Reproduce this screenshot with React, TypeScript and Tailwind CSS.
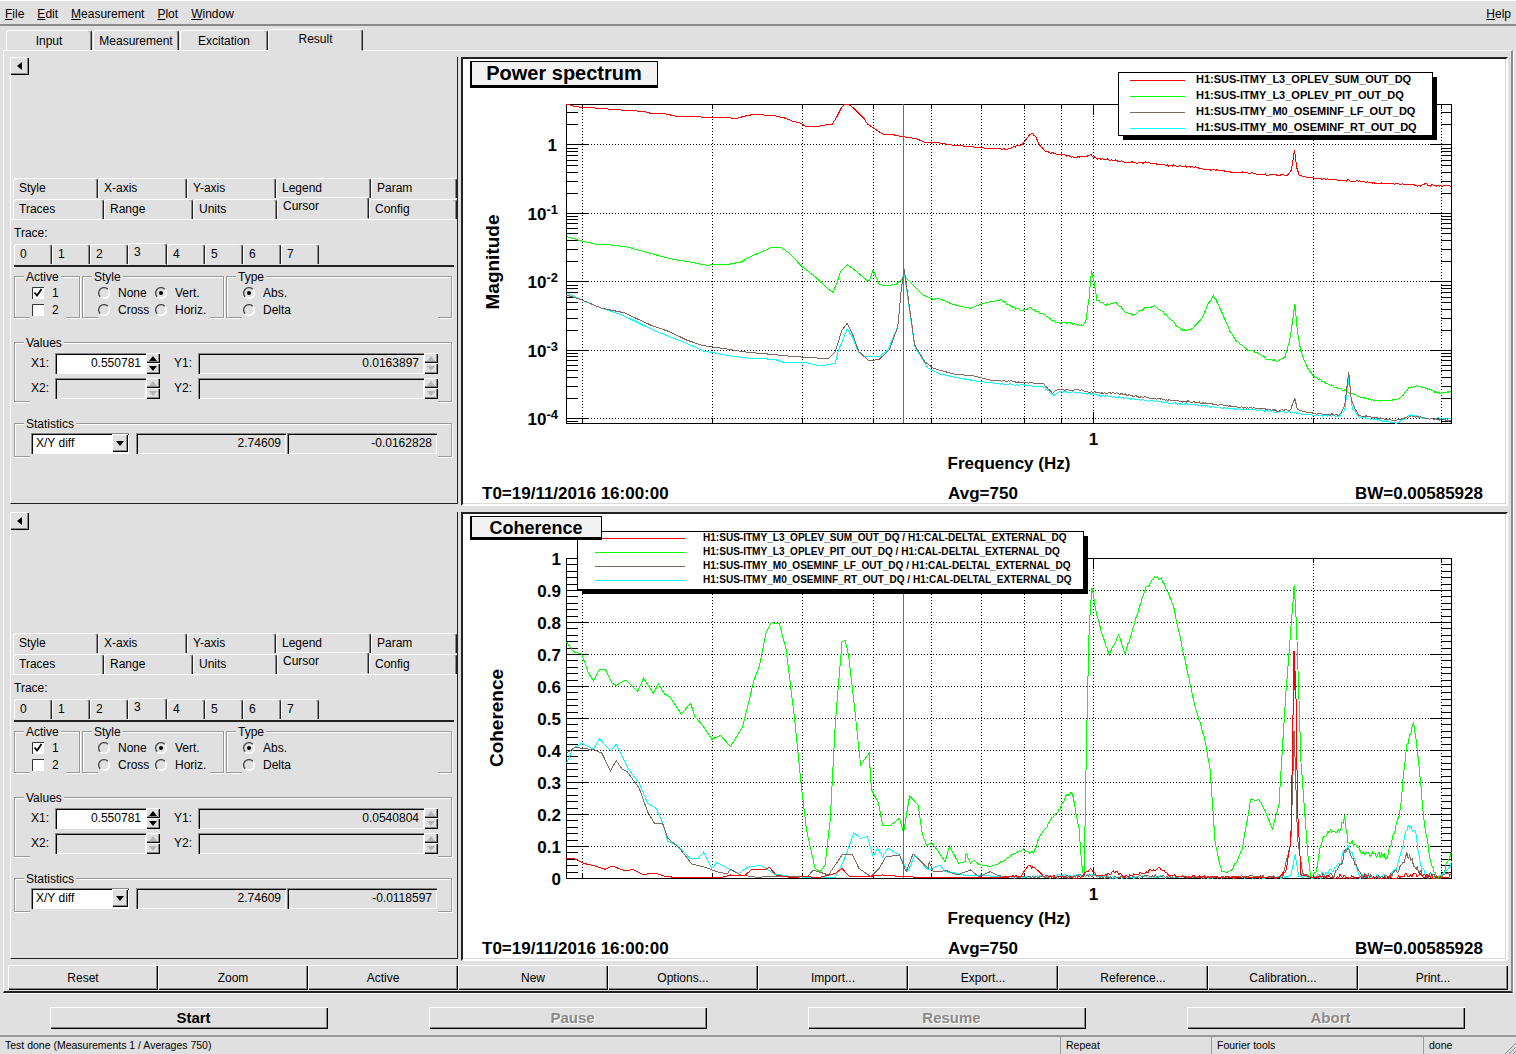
import type { ReactNode } from "react";

type Pts = [number, number][];

const BROWN = "#80675c";
const RAISED = "shadow-[inset_1px_1px_0_#fff,inset_-1px_-1px_0_#000,inset_-2px_-2px_0_#8a8a8a]";
const SUNKEN = "shadow-[inset_1px_1px_0_#8a8a8a,inset_2px_2px_0_#000,inset_-1px_-1px_0_#fff]";

// traces were read off the screenshot: left half and right half of each plot
const spec = {
  red: [
    [[315,160],[340,170],[362,172],[400,174],[450,178],[500,182],[545,184],[570,192],[600,190],[640,199],[700,200],[745,203],[790,202],[815,206],[840,199],[870,193],[930,197],[960,204],[985,214],[1010,220],[1020,228],[1040,229],[1060,229],[1080,225],[1100,224],[1115,200],[1130,170],[1140,160],[1155,166],[1170,180],[1195,205],[1205,222],[1225,235],[1250,252],[1275,253],[1310,260],[1350,266],[1375,277],[1415,278],[1460,286],[1500,289],[1540,293],[1568,296]],
    [[0,295],[30,296],[55,298],[75,290],[95,285],[110,265],[125,250],[135,260],[150,290],[165,304],[190,310],[215,314],[250,322],[280,320],[300,314],[315,326],[350,329],[380,332],[420,338],[470,338],[520,345],[570,349],[600,350],[640,358],[680,360],[720,367],[760,367],[800,373],[860,375],[885,376],[897,360],[906,300],[912,350],[920,378],[960,384],[1000,388],[1060,391],[1100,393],[1150,399],[1200,401],[1250,404],[1280,407],[1295,400],[1310,407],[1340,407],[1376,410]],
  ],
  green: [
    [[315,560],[360,573],[400,582],[440,584],[490,590],[530,601],[570,612],[600,620],[630,628],[680,636],[730,646],[770,642],[800,642],[830,636],[870,615],[920,593],[950,593],[975,610],[1010,648],[1050,680],[1090,718],[1103,727],[1115,700],[1125,665],[1145,644],[1165,658],[1205,692],[1212,690],[1222,660],[1240,703],[1260,708],[1290,703],[1315,680],[1335,700],[1370,735],[1400,748],[1415,745],[1450,760],[1475,768],[1510,775],[1540,763],[1568,755]],
    [[0,757],[35,750],[65,772],[95,782],[120,775],[170,800],[195,817],[245,820],[275,828],[285,815],[295,740],[302,660],[310,700],[318,750],[345,765],[375,758],[405,787],[425,795],[460,775],[490,768],[520,790],[560,832],[575,842],[600,838],[630,805],[650,760],[665,737],[680,765],[715,845],[735,875],[770,902],[790,905],[830,930],[860,932],[878,920],[892,870],[907,762],[915,850],[925,905],[945,955],[965,980],[1000,1000],[1050,1020],[1100,1040],[1150,1052],[1190,1052],[1220,1045],[1245,1015],[1265,1007],[1300,1015],[1320,1025],[1350,1030],[1376,1022]],
  ],
  brown: [
    [[315,735],[360,750],[420,775],[485,788],[570,828],[620,845],[670,870],[720,887],[790,897],[850,907],[920,913],[960,917],[1020,922],[1090,926],[1110,905],[1130,840],[1145,820],[1160,850],[1180,905],[1210,933],[1240,928],[1270,900],[1295,830],[1305,720],[1314,658],[1324,730],[1345,885],[1375,935],[1400,955],[1460,972],[1520,978],[1568,990]],
    [[0,988],[50,993],[100,998],[160,1003],[185,1030],[205,1018],[260,1020],[310,1028],[380,1030],[460,1042],[530,1050],[600,1056],[680,1064],[740,1072],[800,1075],[860,1082],[895,1078],[907,1045],[915,1080],[960,1090],[1040,1095],[1055,1070],[1067,965],[1075,1050],[1095,1095],[1150,1102],[1210,1112],[1250,1098],[1300,1105],[1376,1112]],
  ],
  cyan: [
    [[315,728],[360,750],[420,775],[480,795],[570,840],[620,860],[670,880],[720,903],[770,912],[800,918],[860,925],[930,928],[960,938],[1020,937],[1065,948],[1110,940],[1120,900],[1145,838],[1160,860],[1178,905],[1195,918],[1240,920],[1265,900],[1295,830],[1305,720],[1314,665],[1324,740],[1345,890],[1385,955],[1420,972],[1480,985],[1540,995],[1568,998]],
    [[0,994],[50,1003],[110,1007],[160,1012],[190,1038],[210,1024],[260,1028],[310,1033],[380,1042],[460,1050],[530,1058],[600,1064],[680,1072],[740,1078],[800,1080],[860,1085],[905,1088],[940,1095],[1040,1098],[1055,1080],[1068,985],[1078,1075],[1100,1102],[1150,1108],[1210,1120],[1250,1095],[1300,1106],[1376,1106]],
  ],
} as Record<string, [Pts, Pts]>;

const coh = {
  red: [
    [[315,1045],[340,1047],[365,1060],[400,1068],[430,1078],[450,1068],[490,1083],[510,1078],[540,1093],[580,1090],[610,1100],[660,1103],[700,1105],[770,1103],[800,1095],[840,1098],[865,1077],[900,1080],[915,1072],[935,1095],[975,1102],[1030,1100],[1060,1103],[1110,1090],[1130,1075],[1150,1098],[1200,1100],[1250,1095],[1312,1100],[1400,1103],[1568,1103]],
    [[0,1100],[90,1100],[115,1068],[140,1080],[160,1100],[270,1103],[300,1075],[320,1100],[375,1085],[400,1100],[470,1085],[505,1073],[530,1095],[580,1100],[860,1103],[880,1080],[895,1000],[903,530],[905,423],[910,540],[915,900],[925,1095],[960,1103],[1200,1103],[1275,1092],[1290,1103],[1376,1103]],
  ],
  green: [
    [[315,395],[335,425],[360,432],[380,490],[395,512],[412,478],[430,478],[450,520],[462,526],[490,510],[525,545],[543,505],[572,550],[587,522],[605,552],[620,560],[655,612],[682,580],[695,620],[720,650],[745,688],[770,676],[800,710],[836,650],[870,510],[885,470],[905,370],[920,338],[945,342],[965,420],[990,630],[1010,830],[1025,960],[1050,1075],[1065,1085],[1080,1065],[1095,930],[1110,640],[1130,395],[1140,392],[1150,440],[1170,620],[1185,765],[1210,730],[1217,838],[1238,880],[1250,945],[1275,945],[1300,925],[1312,968],[1330,858],[1355,885],[1368,975],[1380,1005],[1395,998],[1415,1025],[1435,1055],[1448,1008],[1475,1060],[1495,1055],[1497,1030],[1510,1060],[1520,1050],[1535,1063],[1568,1070]],
    [[0,1065],[30,1060],[60,1040],[95,1018],[130,1030],[150,975],[185,925],[205,900],[225,860],[245,848],[265,960],[275,1085],[280,1095],[287,700],[295,350],[303,230],[315,300],[335,380],[355,432],[383,375],[402,432],[425,355],[460,240],[490,203],[510,205],[545,285],[580,450],[610,590],[640,690],[655,780],[670,1000],[690,1088],[720,1080],[750,1020],[775,870],[800,870],[820,905],[840,960],[860,880],[880,550],[905,228],[912,350],[925,750],[945,1030],[955,1100],[970,1085],[990,975],[1020,960],[1040,960],[1055,920],[1065,990],[1090,1005],[1100,1025],[1180,1040],[1200,975],[1220,900],[1240,710],[1260,630],[1275,760],[1290,920],[1310,1050],[1325,1098],[1345,1100],[1365,1040],[1376,1020]],
  ],
  brown: [
    [[315,730],[340,712],[400,720],[420,730],[445,783],[462,752],[480,778],[495,785],[530,835],[555,905],[575,940],[600,942],[615,985],[650,1015],[685,1062],[720,1070],[760,1085],[790,1092],[800,1078],[830,1095],[880,1102],[940,1098],[990,1100],[1030,1098],[1045,1080],[1090,1095],[1130,1035],[1160,1033],[1180,1075],[1215,1100],[1240,1075],[1260,1040],[1300,1035],[1320,1085],[1340,1032],[1385,1075],[1388,1055],[1400,1085],[1440,1082],[1470,1095],[1510,1080],[1535,1100],[1568,1085]],
    [[0,1088],[30,1100],[100,1102],[200,1102],[300,1095],[340,1103],[480,1098],[650,1103],[790,1098],[870,1103],[895,1000],[905,660],[915,990],[930,1090],[960,1103],[1020,1095],[1045,1060],[1065,1005],[1085,1060],[1110,1095],[1180,1102],[1220,1075],[1240,1035],[1260,1060],[1290,1095],[1340,1103],[1376,1090]],
  ],
  cyan: [
    [[315,760],[335,715],[360,700],[395,718],[412,686],[445,722],[462,703],[500,780],[530,820],[555,880],[580,895],[600,940],[615,995],[640,1003],[680,1045],[705,1045],[720,1027],[745,1075],[760,1057],[800,1080],[825,1090],[850,1072],[890,1066],[930,1092],[970,1098],[1040,1103],[1110,1103],[1140,1040],[1165,968],[1185,985],[1205,980],[1222,1040],[1235,1015],[1250,1040],[1265,1015],[1300,1035],[1325,1085],[1345,1035],[1385,1080],[1420,1065],[1435,1085],[1470,1090],[1500,1098],[1540,1095],[1568,1098]],
    [[0,1098],[100,1103],[180,1098],[300,1095],[340,1103],[480,1100],[650,1103],[880,1103],[895,1095],[908,1035],[918,1100],[960,1103],[1010,1085],[1040,1060],[1065,1000],[1085,1050],[1100,1098],[1190,1100],[1215,1060],[1240,955],[1265,955],[1280,1060],[1300,1100],[1340,1103],[1365,1080],[1376,1040]],
  ],
} as Record<string, [Pts, Pts]>;

const rand = (i: number) => {
  const v = Math.sin(i * 12.9898) * 43758.5453;
  return v - Math.floor(v) - 0.5;
};

// zoom-space points to a path; the right half gets fine noise like the real data
function tracePath(parts: [Pts, Pts], yOff: number, noise: (x: number) => number, top: number, bottom: number) {
  const left = parts[0].map(([x, y]) => [460 + x / 2.958, yOff + y / 3]);
  const right = parts[1].map(([x, y]) => [990 + x / 2.975, yOff + y / 3]).filter(([x]) => x > left[left.length - 1][0]);
  const pts = [...left, ...right];
  const out: string[] = [];
  let k = 0;
  for (let i = 0; i < pts.length - 1; i++) {
    const [x0, y0] = pts[i];
    const [x1, y1] = pts[i + 1];
    const steps = x0 < 990 ? 1 : Math.max(1, Math.round((x1 - x0) / 1.3));
    for (let s = 0; s < steps; s++) {
      const x = x0 + ((x1 - x0) * s) / steps;
      const y = y0 + ((y1 - y0) * s) / steps + noise(x) * rand(++k);
      out.push(`${out.length ? "L" : "M"}${x.toFixed(1)} ${Math.min(bottom, Math.max(top, y)).toFixed(1)}`);
    }
  }
  return out.join("");
}

const X_GRID = [582.5, 712.5, 802.5, 873.5, 931.5, 981.5, 1024.5, 1061.5, 1093.5, 1313.5, 1441.5];
const LEFT = 566.5;
const RIGHT = 1451.5;

function Frame({ top, bottom, yMajor, yMinor }: { top: number; bottom: number; yMajor: number[]; yMinor: number[] }) {
  return (
    <g shapeRendering="crispEdges" stroke="#000" fill="none">
      {X_GRID.map((x) => (
        <line key={x} x1={x} x2={x} y1={top} y2={bottom} strokeDasharray="1 2" />
      ))}
      {yMajor.map((y) => (
        <line key={y} x1={LEFT} x2={RIGHT} y1={y} y2={y} strokeDasharray="1 2" />
      ))}
      {X_GRID.map((x) => (
        <path key={x} d={`M${x} ${top}v${x === 1093.5 ? 11 : 5}M${x} ${bottom}v-${x === 1093.5 ? 11 : 5}`} />
      ))}
      {yMajor.map((y) => (
        <path key={y} d={`M${LEFT} ${y}h22M${RIGHT} ${y}h-22`} />
      ))}
      {yMinor.map((y, i) => (
        <path key={i} d={`M${LEFT} ${y}h11M${RIGHT} ${y}h-11`} />
      ))}
      <rect x={LEFT} y={top} width={RIGHT - LEFT} height={bottom - top} />
    </g>
  );
}

function Footer() {
  return (
    <g>
      <text x={1009} y={469} textAnchor="middle" className="text-[17px] font-bold">Frequency (Hz)</text>
      <text x={482} y={499} className="text-[17px] font-bold">T0=19/11/2016 16:00:00</text>
      <text x={983} y={499} textAnchor="middle" className="text-[17px] font-bold">Avg=750</text>
      <text x={1483} y={499} textAnchor="end" className="text-[17px] font-bold">BW=0.00585928</text>
    </g>
  );
}

function Legend({ x, y, w, h, lineX, lineW, textX, textDy, rows, size, ys }: { x: number; y: number; w: number; h: number; lineX: number; lineW: number; textX: number; textDy: number; rows: string[]; size: string; ys: number[] }) {
  const colors = ["#ff0000", "#00ff00", BROWN, "#00ffff"];
  return (
    <g>
      <rect x={x + 5} y={y + 5} width={w} height={h} fill="#000" shapeRendering="crispEdges" />
      <rect x={x + 0.5} y={y + 0.5} width={w} height={h} fill="#fff" stroke="#000" shapeRendering="crispEdges" />
      {rows.map((r, i) => (
        <g key={r}>
          <rect x={lineX} y={ys[i]} width={lineW} height={1} fill={colors[i]} shapeRendering="crispEdges" />
          <text x={textX} y={ys[i] + textDy} className={size + " font-bold"}>{r}</text>
        </g>
      ))}
    </g>
  );
}

function TitleBox({ x, y, w, h, size, label, dy }: { x: number; y: number; w: number; h: number; size: string; label: string; dy: number }) {
  return (
    <g>
      <rect x={x} y={y} width={w} height={h} fill="#000" shapeRendering="crispEdges" />
      <rect x={x + 2} y={y + 1} width={w - 3} height={h - 4} fill="#f2f2f2" shapeRendering="crispEdges" />
      <text x={x + w / 2} y={y + h / 2 + dy} textAnchor="middle" className={size + " font-bold"}>{label}</text>
    </g>
  );
}

// faint inner edge of the drawing pad
function PadEdge({ bottom }: { bottom: number }) {
  return <path d={`M463 ${bottom}H1505.5V0`} fill="none" stroke="#d8d8d8" shapeRendering="crispEdges" />;
}

function SpectrumPlot() {
  const top = 104;
  const bottom = 423;
  const yMajor = [144.5, 213.5, 281.5, 350.5, 418.5];
  const dec = 68.8;
  const yMinor: number[] = [];
  yMajor.forEach((y0) => {
    for (let f = 2; f < 10; f++) {
      const y = y0 - dec * Math.log10(f);
      if (y > top) yMinor.push(Math.round(y) + 0.5);
    }
  });
  yMinor.push(421.5);
  const noise = (x: number) => (x > 1000 ? 1.6 : 0);
  const ticks: [string, string | null, number][] = [["1", null, 144.5], ["10", "-1", 213.5], ["10", "-2", 281.5], ["10", "-3", 350.5], ["10", "-4", 418.5]];
  return (
    <svg viewBox="463 59 1043 445" className="w-full h-full block">
      <PadEdge bottom={503.5} />
      <Frame top={top} bottom={bottom} yMajor={yMajor} yMinor={yMinor} />
      {(["red", "green", "cyan", "brown"] as const).map((c) => (
        <path key={c} d={tracePath(spec[c], 50, noise, top, bottom)} fill="none" strokeWidth={1} shapeRendering="crispEdges" stroke={c === "red" ? "#ff0000" : c === "green" ? "#00ff00" : c === "cyan" ? "#00ffff" : BROWN} />
      ))}
      <line x1={903.5} x2={903.5} y1={top} y2={bottom} stroke={BROWN} shapeRendering="crispEdges" />
      {ticks.map(([t, e, y]) => (
        <text key={y} x={e ? 558 : 557} y={y + 6} textAnchor="end" className="text-[17px] font-bold">
          {t}
          {e && <tspan dy={-6} className="text-[13px]">{e}</tspan>}
        </text>
      ))}
      <text x={1093.5} y={445} textAnchor="middle" className="text-[17px] font-bold">1</text>
      <text transform="translate(499 262) rotate(-90)" textAnchor="middle" className="text-[19px] font-bold">Magnitude</text>
      <Footer />
      <Legend
        x={1118} y={72} w={314} h={63} lineX={1130} lineW={55} textX={1196} textDy={2.5} size="text-[11px]"
        ys={[80, 96, 112, 128]}
        rows={["H1:SUS-ITMY_L3_OPLEV_SUM_OUT_DQ", "H1:SUS-ITMY_L3_OPLEV_PIT_OUT_DQ", "H1:SUS-ITMY_M0_OSEMINF_LF_OUT_DQ", "H1:SUS-ITMY_M0_OSEMINF_RT_OUT_DQ"]}
      />
      <TitleBox x={470} y={61} w={188} h={27} size="text-[20px]" label="Power spectrum" dy={5} />
    </svg>
  );
}

function CoherencePlot() {
  const top = 558;
  const bottom = 878;
  const yMajor = [0.1, 0.2, 0.3, 0.4, 0.5, 0.6, 0.7, 0.8, 0.9].map((v) => Math.round(bottom - v * 320) + 0.5);
  const yMinor: number[] = [];
  for (let i = 1; i < 50; i++) if (i % 5) yMinor.push(Math.round(bottom - i * 6.4) + 0.5);
  const noise = (x: number) => (x > 1320 ? 7 : x > 1000 ? 2.5 : 0);
  const labels = ["0", "0.1", "0.2", "0.3", "0.4", "0.5", "0.6", "0.7", "0.8", "0.9", "1"];
  return (
    <svg viewBox="463 514 1043 445" className="w-full h-full block">
      <PadEdge bottom={958.5} />
      <Frame top={top} bottom={bottom} yMajor={yMajor} yMinor={yMinor} />
      {(["green", "cyan", "brown", "red"] as const).map((c) => (
        <path key={c} d={tracePath(coh[c], 510, noise, top, bottom)} fill="none" strokeWidth={1} shapeRendering="crispEdges" stroke={c === "red" ? "#ff0000" : c === "green" ? "#00ff00" : c === "cyan" ? "#00ffff" : BROWN} />
      ))}
      <line x1={1294} x2={1294} y1={651} y2={690} stroke="#ff0000" strokeWidth={2} shapeRendering="crispEdges" />
      <line x1={1294} x2={1294} y1={731} y2={757} stroke={BROWN} strokeWidth={2} shapeRendering="crispEdges" />
      <line x1={903.5} x2={903.5} y1={top} y2={bottom} stroke={BROWN} shapeRendering="crispEdges" />
      {labels.map((t, i) => (
        <text key={t} x={561} y={bottom - i * 32 + 7} textAnchor="end" className="text-[17px] font-bold">{t}</text>
      ))}
      <text x={1093.5} y={900} textAnchor="middle" className="text-[17px] font-bold">1</text>
      <text transform="translate(503 718) rotate(-90)" textAnchor="middle" className="text-[19px] font-bold">Coherence</text>
      <g transform="translate(0 455)"><Footer /></g>
      <Legend
        x={577} y={531} w={506} h={58} lineX={595} lineW={90} textX={703} textDy={3} size="text-[10.05px]"
        ys={[538, 552, 566, 580]}
        rows={[
          "H1:SUS-ITMY_L3_OPLEV_SUM_OUT_DQ / H1:CAL-DELTAL_EXTERNAL_DQ",
          "H1:SUS-ITMY_L3_OPLEV_PIT_OUT_DQ / H1:CAL-DELTAL_EXTERNAL_DQ",
          "H1:SUS-ITMY_M0_OSEMINF_LF_OUT_DQ / H1:CAL-DELTAL_EXTERNAL_DQ",
          "H1:SUS-ITMY_M0_OSEMINF_RT_OUT_DQ / H1:CAL-DELTAL_EXTERNAL_DQ",
        ]}
      />
      <TitleBox x={470} y={516} w={132} h={24} size="text-[18px]" label="Coherence" dy={6} />
    </svg>
  );
}

function Canvas({ children }: { children: ReactNode }) {
  return (
    <div className="w-[1047px] h-[449px] shrink-0 bg-white border-t-2 border-l-2 border-t-[#222] border-l-[#222] border-r-2 border-b-2 border-r-[#fff] border-b-[#fff] overflow-hidden">
      {children}
    </div>
  );
}

function Triangle({ dir, gray }: { dir: "up" | "down" | "left"; gray?: boolean }) {
  const pts = dir === "up" ? "0,5 4,0 8,5" : dir === "down" ? "0,0 8,0 4,5" : "5,0 5,8 0,4";
  return (
    <svg width={dir === "left" ? 5 : 8} height={dir === "left" ? 8 : 5} className="block">
      <polygon points={pts} fill={gray ? "#b4b4b4" : "#000"} />
    </svg>
  );
}

function Spinner({ gray }: { gray?: boolean }) {
  return (
    <div className="w-[14px] h-[21px] flex flex-col shrink-0">
      {(["up", "down"] as const).map((d) => (
        <div key={d} className={`h-[10px] flex-1 flex items-center justify-center ${RAISED}`}>
          <Triangle dir={d} gray={gray} />
        </div>
      ))}
    </div>
  );
}

function Field({ value, w, white }: { value?: string; w: string; white?: boolean }) {
  return (
    <div className={`${w} h-[21px] flex items-center justify-end pr-[5px] shrink-0 ${white ? "bg-white" : ""} ${SUNKEN}`}>{value}</div>
  );
}

function Radio({ checked }: { checked?: boolean }) {
  return (
    <svg width={12} height={12} className="block shrink-0">
      <path d="M2.2 9.8A5.2 5.2 0 0 0 9.8 2.2" fill="none" stroke="#fff" strokeWidth={1.6} />
      <path d="M2.2 9.8A5.2 5.2 0 0 1 9.8 2.2" fill="none" stroke="#444" strokeWidth={1.3} />
      {checked && <circle cx={6} cy={6} r={2} fill="#000" />}
    </svg>
  );
}

function Check({ checked }: { checked?: boolean }) {
  return (
    <svg width={12} height={12} className="block shrink-0">
      <rect x={0} y={0} width={12} height={12} fill="#fff" />
      <path d="M0.5 12V0.5H12" fill="none" stroke="#333" />
      {checked && <path d="M2.5 5.5l2.5 3 4.5-6.5" fill="none" stroke="#000" strokeWidth={1.8} />}
    </svg>
  );
}

function Group({ label, className, children }: { label: string; className: string; children: ReactNode }) {
  return (
    <div className={`relative border border-[#9a9a9a] shadow-[1px_1px_0_#fff,inset_1px_1px_0_#fff] ${className}`}>
      <span className="absolute -top-[7px] left-[9px] bg-[#e0e0e0] px-[2px] leading-[14px]">{label}</span>
      <div className="absolute -bottom-[2px] left-[15px] right-[13px] h-[3px] bg-[#e0e0e0]" />
      {children}
    </div>
  );
}

function Tab({ w, label, active, center }: { w: string; label: string; active?: boolean; center?: boolean }) {
  const pad = active ? (center ? "pb-[1px]" : "pb-[3px]") : center ? "pt-[2px]" : "";
  return (
    <div
      className={`${w} shrink-0 flex items-center rounded-t-[3px] border-t border-l border-white border-r border-r-[#222] shadow-[inset_-1px_0_0_#8a8a8a] ${center ? "justify-center" : "pl-[5px]"} ${pad} ${
        active ? "h-[22px] -mt-[2px] relative bg-[#e0e0e0] border-b border-b-[#e0e0e0] -mb-px" : "h-[20px]"
      }`}
    >
      {label}
    </div>
  );
}

function ControlPanel({ y1, stat1, stat2 }: { y1: string; stat1: string; stat2: string }) {
  return (
    <div className="w-[448px] h-[447px] shrink-0 flex flex-col border-l border-l-white border-r border-r-[#222] border-b border-b-[#222]">
      <button className={`w-[19px] h-[18px] -ml-px flex items-center justify-center ${RAISED}`}>
        <Triangle dir="left" />
      </button>
      <div className="mt-[103px] flex pl-[2px]">
        <Tab w="w-[85px]" label="Style" />
        <Tab w="w-[89px]" label="X-axis" />
        <Tab w="w-[89px]" label="Y-axis" />
        <Tab w="w-[95px]" label="Legend" />
        <Tab w="w-[86px]" label="Param" />
      </div>
      <div className="flex pl-[2px] mt-px">
        <Tab w="w-[91px]" label="Traces" />
        <Tab w="w-[89px]" label="Range" />
        <Tab w="w-[84px]" label="Units" />
        <Tab w="w-[92px]" label="Cursor" active />
        <Tab w="w-[88px]" label="Config" />
      </div>
      <div className="border-t border-white flex-1 px-[3px] flex flex-col">
        <div className="mt-[6px] h-[14px] leading-[14px]">Trace:</div>
        <div className="mt-[2px] flex h-[22px] items-end">
          {["0", "1", "2", "3", "4", "5", "6", "7"].map((t) => (
            <Tab key={t} w={t === "3" ? "w-[39px]" : "w-[38px]"} label={t} active={t === "3"} />
          ))}
        </div>
        <div className="h-[2px] w-[440px] bg-[#222] mt-[1px]" />
        <div className="mt-[9px] flex gap-[2px]">
          <Group label="Active" className="w-[66px] h-[42px] pl-[17px] pt-[8px]">
            <div className="flex items-center gap-[8px] h-[17px]"><Check checked />1</div>
            <div className="flex items-center gap-[8px] h-[17px]"><Check />2</div>
          </Group>
          <Group label="Style" className="w-[142px] h-[42px] pl-[15px] pt-[8px]">
            <div className="flex items-center h-[17px]"><Radio /><span className="ml-[8px] w-[37px]">None</span><Radio checked /><span className="ml-[8px]">Vert.</span></div>
            <div className="flex items-center h-[17px]"><Radio /><span className="ml-[8px] w-[37px]">Cross</span><Radio /><span className="ml-[8px]">Horiz.</span></div>
          </Group>
          <Group label="Type" className="w-[226px] h-[42px] pl-[16px] pt-[8px]">
            <div className="flex items-center h-[17px]"><Radio checked /><span className="ml-[8px]">Abs.</span></div>
            <div className="flex items-center h-[17px]"><Radio /><span className="ml-[8px]">Delta</span></div>
          </Group>
        </div>
        <Group label="Values" className="mt-[24px] w-[438px] h-[60px] pl-[16px] pt-[10px]">
          <div className="flex items-center">
            <span className="w-[24px]">X1:</span>
            <Field value="0.550781" w="w-[91px]" white />
            <Spinner />
            <span className="ml-[14px] w-[24px]">Y1:</span>
            <Field value={y1} w="w-[226px]" />
            <Spinner gray />
          </div>
          <div className="flex items-center mt-[4px]">
            <span className="w-[24px]">X2:</span>
            <Field w="w-[91px]" />
            <Spinner gray />
            <span className="ml-[14px] w-[24px]">Y2:</span>
            <Field w="w-[226px]" />
            <Spinner gray />
          </div>
        </Group>
        <Group label="Statistics" className="mt-[21px] w-[438px] h-[34px] pl-[16px] pt-[9px]">
          <div className="flex items-center">
            <div className={`w-[98px] h-[21px] bg-white flex items-center justify-between pl-[5px] pr-[1px] ${SUNKEN}`}>
              X/Y diff
              <div className={`w-[16px] h-[18px] bg-[#e0e0e0] flex items-center justify-center ${RAISED}`}><Triangle dir="down" /></div>
            </div>
            <div className="ml-[7px]"><Field value={stat1} w="w-[150px]" /></div>
            <div className="ml-px"><Field value={stat2} w="w-[150px]" /></div>
          </div>
        </Group>
      </div>
    </div>
  );
}

const ACTIONS = ["Reset", "Zoom", "Active", "New", "Options...", "Import...", "Export...", "Reference...", "Calibration...", "Print..."];

export default function App() {
  return (
    <div className="w-[1516px] h-[1054px] overflow-hidden flex flex-col bg-[#e0e0e0] text-black text-[12px] font-['Liberation_Sans',Arial,sans-serif]">
      <div className="h-[26px] flex items-center gap-[13px] pl-[5px] pt-[3px] border-t border-t-white border-b-2 border-b-[#8a8a8a]">
        <span><u>F</u>ile</span>
        <span><u>E</u>dit</span>
        <span><u>M</u>easurement</span>
        <span><u>P</u>lot</span>
        <span><u>W</u>indow</span>
        <span className="ml-auto mr-[5px]"><u>H</u>elp</span>
      </div>
      <div className="h-[24px] flex items-end pl-[6px] gap-px">
        <Tab w="w-[86px]" label="Input" center />
        <Tab w="w-[86px]" label="Measurement" center />
        <Tab w="w-[88px]" label="Excitation" center />
        <div className="-ml-px"><Tab w="w-[95px]" label="Result" center active /></div>
      </div>
      <div className="h-[944px] mx-[3px] pl-[6px] pr-[2px] pt-[6px] flex flex-col border-t border-l border-white border-r-2 border-r-[#8a8a8a] border-b-2 border-b-[#222] shadow-[1px_1px_0_#fff]">
        <div className="flex gap-[3px] h-[449px]">
          <ControlPanel y1="0.0163897" stat1="2.74609" stat2="-0.0162828" />
          <Canvas><SpectrumPlot /></Canvas>
        </div>
        <div className="flex gap-[3px] h-[449px] mt-[6px]">
          <ControlPanel y1="0.0540804" stat1="2.74609" stat2="-0.0118597" />
          <Canvas><CoherencePlot /></Canvas>
        </div>
        <div className="mt-[4px] -ml-[2px] flex h-[25px]">
          {ACTIONS.map((a) => (
            <button key={a} className={`w-[150px] h-[25px] shrink-0 pt-px ${RAISED}`}>{a}</button>
          ))}
        </div>
      </div>
      <div className="mt-[14px] pl-[50px] flex gap-[101px]">
        {["Start", "Pause", "Resume", "Abort"].map((b, i) => (
          <button key={b} className={`w-[278px] h-[22px] pl-[9px] text-[15px] font-bold ${RAISED} ${i ? "text-[#8a8a8a] [text-shadow:1px_1px_0_#fff]" : ""}`}>{b}</button>
        ))}
      </div>
      <div className="mt-[6px] h-[19px] flex text-[10.5px] border-t-2 border-t-[#9a9a9a] relative">
        <div className="w-[1060px] pl-[5px] leading-[16px]">Test done (Measurements 1 / Averages 750)</div>
        <div className="w-[151px] pl-[5px] leading-[16px] border-l border-l-[#9a9a9a]">Repeat</div>
        <div className="w-[212px] pl-[5px] leading-[16px] border-l border-l-[#9a9a9a]">Fourier tools</div>
        <div className="flex-1 pl-[5px] leading-[16px] border-l border-l-[#9a9a9a]">done</div>
        <svg width={12} height={12} className="absolute right-0 bottom-0">
          <path d="M12 1L1 12M12 5L5 12M12 9L9 12" stroke="#8a8a8a" fill="none" />
        </svg>
      </div>
    </div>
  );
}
